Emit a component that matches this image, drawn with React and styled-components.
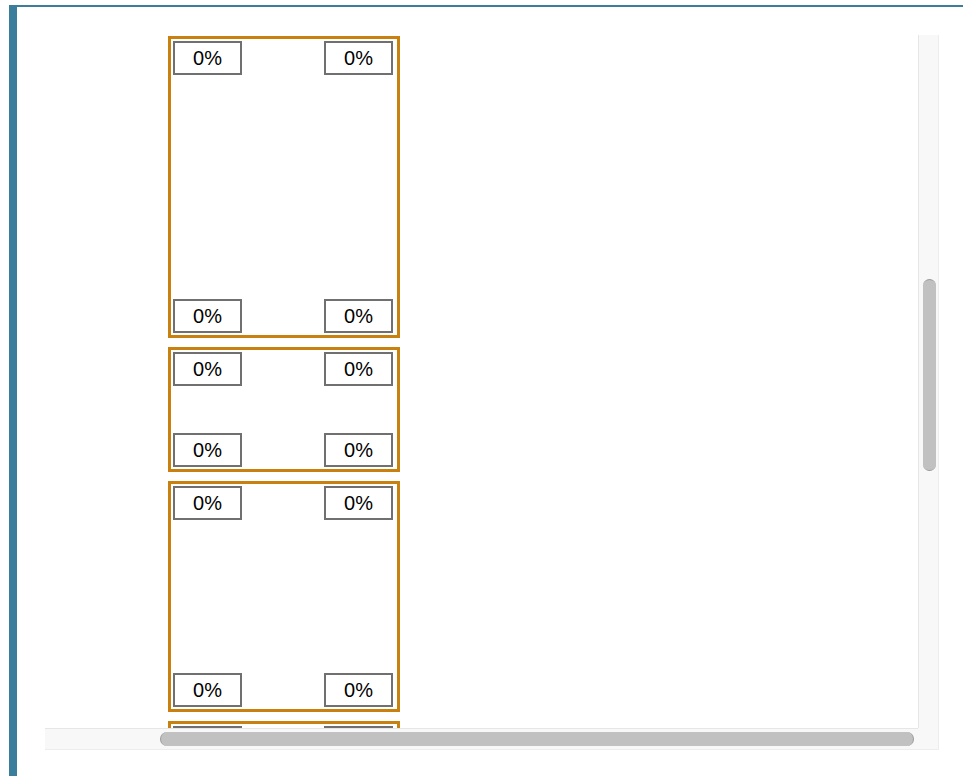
import React from "react";
import styled, { createGlobalStyle } from "styled-components";

const GlobalStyle = createGlobalStyle`
  html, body {
    margin: 0;
    padding: 0;
    background: #fff;
    overflow: hidden;
  }
  body {
    font-family: "Liberation Sans", Arial, sans-serif;
  }
`;

const cells = [302, 125, 231, 231];

const Frame = styled.div`
  margin: 5px 0 0 9px;
  height: 780px;
  border-top: 2px solid #3b7e9b;
  border-left: 8px solid #3b7e9b;
  padding: 28px 0 0 28px;
  box-sizing: border-box;
`;

const Scroller = styled.div`
  display: grid;
  grid-template-columns: 873px 21px;
  grid-template-rows: 693px 22px;
  width: 894px;
`;

const Viewport = styled.div`
  overflow: hidden;
  background: #fff;
  padding: 1px 0 0 123px;
  box-sizing: border-box;
`;

const Stack = styled.div`
  display: flex;
  flex-direction: column;
  gap: 9px;
  width: 232px;
`;

const Cell = styled.div`
  height: ${(p) => p.$h}px;
  flex-shrink: 0;
  border: 3px solid #c8800e;
  padding: 2px 4px 2px 2px;
  box-sizing: border-box;
  display: flex;
  flex-direction: column;
  justify-content: space-between;
`;

const Row = styled.div`
  display: flex;
  justify-content: space-between;
`;

const Pct = styled.div`
  width: 69px;
  height: 34px;
  box-sizing: border-box;
  border: 2px solid #707070;
  display: flex;
  align-items: center;
  justify-content: center;
  font-size: 20px;
  color: #000;
`;

const VTrack = styled.div`
  background: #f8f8f8;
  border-left: 1px solid #e6e6e6;
  border-right: 1px solid #ededed;
  box-sizing: border-box;
  padding: 244px 2px 0 4px;
`;

const VThumb = styled.div`
  width: 13px;
  height: 192px;
  background: #c1c1c1;
  border-radius: 7px;
  border-top: 1px solid #9a9a9a;
  border-bottom: 1px solid #9a9a9a;
  box-sizing: border-box;
`;

const HTrack = styled.div`
  background: #f8f8f8;
  border-top: 1px solid #e6e6e6;
  border-bottom: 1px solid #ededed;
  box-sizing: border-box;
  padding: 3px 4px 0 115px;
`;

const HThumb = styled.div`
  height: 14px;
  background: #c1c1c1;
  border-radius: 7px;
  border-left: 1px solid #9a9a9a;
  border-right: 1px solid #9a9a9a;
  box-sizing: border-box;
`;

const Corner = styled.div`
  background: #f8f8f8;
  border-bottom: 1px solid #ededed;
  border-right: 1px solid #ededed;
  box-sizing: border-box;
`;

const App = () => {
  return (
    <>
      <GlobalStyle />
      <Frame>
        <Scroller>
          <Viewport>
            <Stack>
              {cells.map((h, i) => (
                <Cell key={i} $h={h}>
                  <Row>
                    <Pct>0%</Pct>
                    <Pct>0%</Pct>
                  </Row>
                  <Row>
                    <Pct>0%</Pct>
                    <Pct>0%</Pct>
                  </Row>
                </Cell>
              ))}
            </Stack>
          </Viewport>
          <VTrack>
            <VThumb />
          </VTrack>
          <HTrack>
            <HThumb />
          </HTrack>
          <Corner />
        </Scroller>
      </Frame>
    </>
  );
};

export default App;
